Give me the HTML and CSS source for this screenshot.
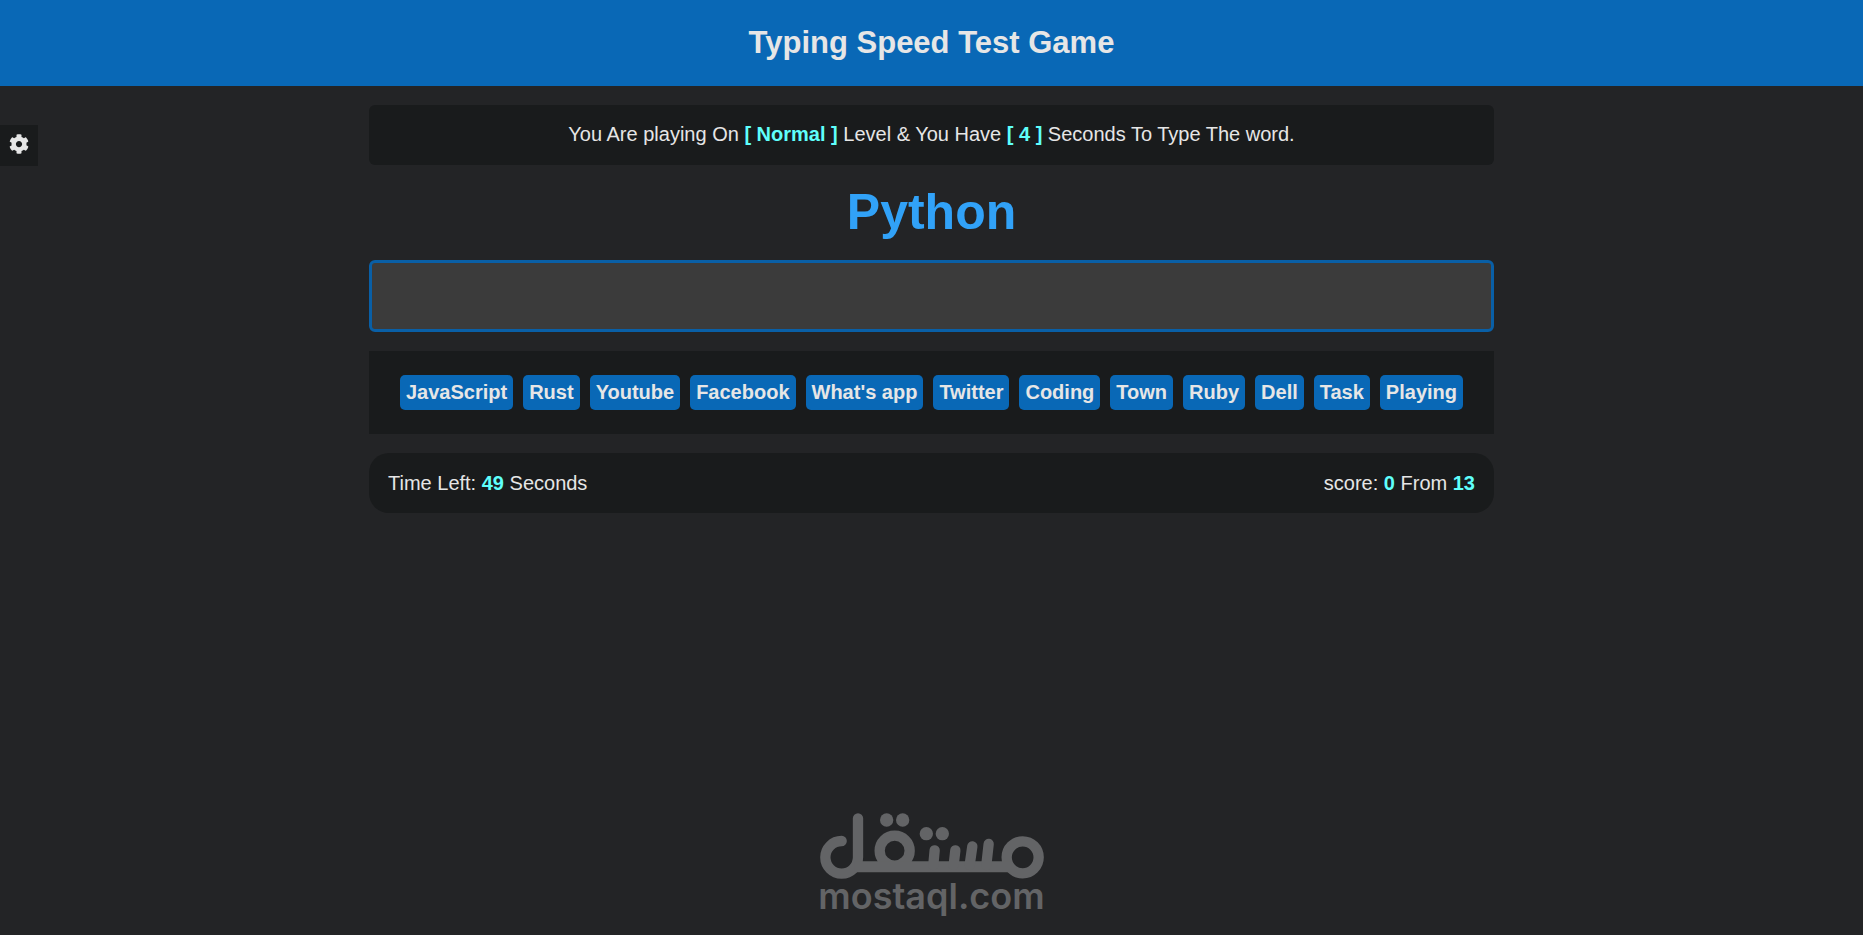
FILE: index.html
```html
<!DOCTYPE html>
<html lang="en">
    <head>
        <meta charset="UTF-8" />
        <meta name="viewport" content="width=device-width, initial-scale=1.0" />
        <title>Typing Speed Test Game</title>
        <link rel="stylesheet" href="styles.css">
    </head>

    <body>
        <header class="header">
            <h1>Typing Speed Test Game</h1>
        </header>

        <button class="settings" type="button" aria-label="Settings">
            <svg viewBox="0 0 512 512" width="20" height="20" fill="currentColor">
                <path d="M487.4 315.7l-42.6-24.6c4.3-23.2 4.3-47 0-70.2l42.6-24.6c4.9-2.8 7.1-8.6 5.5-14-11.1-35.6-30-67.8-54.7-94.6-3.8-4.1-10-5.1-14.8-2.3L380.8 110c-17.9-15.4-38.5-27.3-60.8-35.1V25.800c0-5.600-3.900-10.500-9.400-11.700-36.700-8.200-74.300-7.800-109.200 0-5.500 1.200-9.400 6.100-9.400 11.700V75c-22.200 7.900-42.800 19.800-60.800 35.100L88.700 85.500c-4.900-2.800-11-1.900-14.800 2.300-24.700 26.700-43.600 58.900-54.700 94.600-1.700 5.400.6 11.200 5.500 14L67.300 221c-4.300 23.200-4.300 47 0 70.200l-42.600 24.600c-4.900 2.800-7.100 8.600-5.500 14 11.100 35.600 30 67.800 54.700 94.600 3.800 4.100 10 5.100 14.800 2.300l42.600-24.600c17.900 15.400 38.500 27.300 60.800 35.100v49.200c0 5.600 3.900 10.500 9.400 11.700 36.700 8.200 74.300 7.800 109.200 0 5.500-1.200 9.400-6.100 9.400-11.700v-49.200c22.200-7.900 42.800-19.800 60.800-35.100l42.600 24.600c4.900 2.800 11 1.900 14.800-2.300 24.700-26.700 43.600-58.900 54.700-94.600 1.500-5.500-.7-11.300-5.600-14.100zM256 336c-44.100 0-80-35.900-80-80s35.900-80 80-80 80 35.900 80 80-35.900 80-80 80z" />
            </svg>
        </button>

        <main class="container">
            <div class="message">
                You Are playing On <span>[ Normal ]</span> Level &amp; You Have <span>[ 4 ]</span> Seconds To Type The word.
            </div>

            <h2 class="the-word">Python</h2>

            <input class="input" type="text" aria-label="Type the word" />

            <div class="upcoming-words">
                <div>JavaScript</div>
                <div>Rust</div>
                <div>Youtube</div>
                <div>Facebook</div>
                <div>What's app</div>
                <div>Twitter</div>
                <div>Coding</div>
                <div>Town</div>
                <div>Ruby</div>
                <div>Dell</div>
                <div>Task</div>
                <div>Playing</div>
            </div>

            <div class="control">
                <div>Time Left: <span>49</span> Seconds</div>
                <div>score: <span>0</span> From <span>13</span></div>
            </div>
        </main>

        <footer class="brand">
            <svg viewBox="57 39 672 198" width="224" height="66" fill="none" stroke="currentColor" stroke-width="31" stroke-linecap="round">
                <circle cx="665" cy="172" r="48" />
                <circle cx="281" cy="152" r="45" />
                <path d="M171 55V172A49 49 0 1 1 122 123" />
                <path d="M160 200H630" stroke-width="33" stroke-linecap="butt" />
                <path d="M401 151L397 195M463 151L458 195M514 139L506 195M563 132L556 195" />
                <g fill="currentColor" stroke="none">
                    <circle cx="257" cy="60" r="20" />
                    <circle cx="305" cy="60" r="20" />
                    <circle cx="376" cy="101" r="20" />
                    <circle cx="424" cy="101" r="20" />
                </g>
            </svg>
            <p>mostaql.com</p>
        </footer>
    </body>
</html>
```
FILE: styles.css
```css
* {
    margin: 0;
    padding: 0;
    box-sizing: border-box;
}

body {
    display: flex;
    flex-direction: column;
    min-height: 100vh;
    background-color: #232426;
    color: #e6e6e6;
    font-family: "Liberation Sans", Arial, sans-serif;
    font-size: 20px;
    line-height: 22px;
}

.header {
    padding: 26px 20px;
    background-color: #0968b6;
    text-align: center;
}

.header h1 {
    font-size: 31px;
    line-height: 34px;
}

.settings {
    position: absolute;
    top: 125px;
    left: 0;
    display: flex;
    align-items: flex-start;
    padding: 9px;
    height: 41px;
    border: none;
    background-color: #191b1c;
    color: #e6e6e6;
    cursor: pointer;
}

.container {
    width: 100%;
    max-width: 1125px;
    margin: 0 auto;
    padding: 19px 0;
}

.message {
    padding: 18px 19px 20px;
    border-radius: 6px;
    background-color: #191b1c;
    text-align: center;
}

.container span {
    color: #5ffffb;
    font-weight: bold;
}

.the-word {
    margin: 19px 0;
    color: #31a2f8;
    font-size: 50px;
    line-height: 57px;
    text-align: center;
}

.input {
    display: block;
    width: 100%;
    height: 72px;
    padding: 19px;
    border: 3px solid #095fa6;
    border-radius: 6px;
    outline: none;
    background-color: #3b3b3b;
    color: #e6e6e6;
    font-size: 30px;
    text-align: center;
}

.upcoming-words {
    display: flex;
    flex-wrap: wrap;
    justify-content: center;
    gap: 10px;
    margin: 19px 0;
    padding: 24px;
    background-color: #191b1c;
    font-weight: bold;
}

.upcoming-words div {
    padding: 6px;
    border-radius: 5px;
    background-color: #0968b6;
    line-height: 23px;
}

.control {
    display: flex;
    justify-content: space-between;
    padding: 19px;
    border-radius: 20px;
    background-color: #191b1c;
}

.brand {
    display: flex;
    flex-direction: column;
    align-items: center;
    margin-top: auto;
    padding-bottom: 22px;
    color: #636466;
}

.brand p {
    font-family: Inter, sans-serif;
    font-size: 36px;
    font-weight: 600;
    line-height: 34px;
}
```
